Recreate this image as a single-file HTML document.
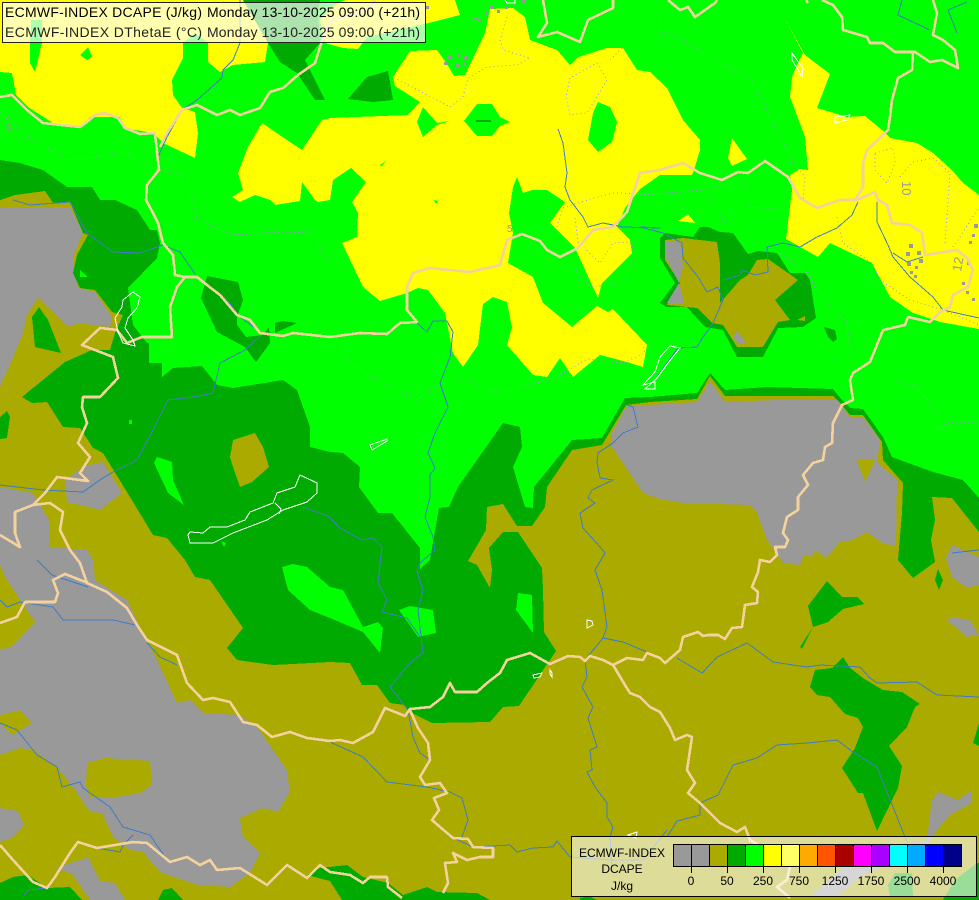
<!DOCTYPE html>
<html><head><meta charset="utf-8"><title>ECMWF-INDEX DCAPE</title>
<style>
html,body{margin:0;padding:0;background:#aa0;width:979px;height:900px;overflow:hidden}
svg{display:block}
text{font-family:"Liberation Sans",sans-serif;fill:#000}
.o{fill:#aaaa00}.g{fill:#999999}.d{fill:#00aa00}.l{fill:#00ff00}.y{fill:#ffff00}
.f polygon{shape-rendering:crispEdges}
.b polyline{fill:none;stroke:#f4d29e;stroke-width:2.6;stroke-linejoin:round;shape-rendering:crispEdges}
.r polyline{fill:none;stroke:#3f7cc4;stroke-width:1;shape-rendering:crispEdges}
.w polygon,.w polyline{fill:none;stroke:#fff;stroke-width:1;shape-rendering:crispEdges}
.c polyline{fill:none;stroke:#9c9cd0;stroke-width:1;stroke-dasharray:1 3;shape-rendering:crispEdges}
.s rect{fill:#999}
</style></head><body>
<svg width="979" height="900" viewBox="0 0 979 900" xmlns="http://www.w3.org/2000/svg">
<rect width="979" height="900" fill="#aaaa00"/>
<g class="f">
<!-- gray -->
<polygon class="g" points="0,208 70,207 83,233 73,257 78,288 95,292 112,317 110,327 78,323 68,327 58,317 38,298 27,315 23,333 15,353 0,387"/>
<polygon class="g" points="0,487 33,493 49,520 50,547 87,550 93,560 95,580 127,600 143,633 157,660 177,703 190,700 203,713 240,715 257,727 287,770 290,792 278,812 263,808 240,818 243,837 260,853 250,873 230,887 197,885 160,872 143,852 130,850 113,837 102,813 90,812 77,793 58,768 33,750 20,748 0,755 0,649 10,648 35,622 5,577 0,565"/>
<polygon class="g" points="65,480 83,467 103,462 122,493 100,510 67,502"/>
<polygon class="o" points="0,715 20,710 32,723 12,735 0,723"/>
<polygon class="o" points="87,763 105,758 150,761 152,785 140,793 110,798 90,797 86,785"/>
<polygon class="g" points="0,808 18,811 24,825 12,838 0,842"/>
<polygon class="g" points="55,868 88,857 100,881 115,883 125,900 90,900 72,874"/>
<polygon class="g" points="627,405 612,433 612,447 643,493 660,499 683,503 750,505 757,513 767,540 783,563 800,565 804,555 812,557 815,550 826,558 840,542 853,540 867,532 882,543 896,546 897,480 877,462 880,440 863,417 850,417 837,400 777,400 725,402 710,381 697,402 650,405"/>
<polygon class="o" points="857,460 875,460 865,482"/>
<polygon class="g" points="952,545 979,557 979,585 967,588 952,577 946,558"/>
<polygon class="g" points="947,620 952,617 970,620 979,635 967,637"/>
<polygon class="g" points="932,800 938,792 958,800 972,790 972,803 950,815 937,830 927,847 860,877 837,897 810,897 860,852 927,840"/>
<!-- dark green main -->
<polygon class="d" points="0,200 15,195 45,191 53,203 70,202 83,233 88,235 77,255 73,273 80,288 95,290 112,312 123,315 115,333 110,350 92,350 65,362 22,397 32,403 47,402 63,427 80,428 93,448 103,453 130,497 153,535 167,538 185,560 195,577 210,580 243,628 227,648 237,660 273,665 330,662 350,663 362,685 377,685 390,703 405,705 410,712 432,723 490,722 503,707 519,706 556,651 544,632 543,590 542,568 518,532 503,532 489,548 492,570 490,588 477,565 468,561 486,530 487,507 503,504 517,526 532,526 545,507 547,487 572,450 602,445 626,405 650,402 697,399 710,376 725,396 833,396 842,405 850,415 863,415 882,442 883,460 903,483 902,513 898,560 913,578 935,562 931,540 935,520 932,497 952,498 979,532 979,0 0,0"/>
<polygon class="o" points="233,440 255,433 263,447 269,467 252,482 240,487 233,467 230,457"/>
<!-- lime main -->
<polygon class="l" points="0,0 979,0 979,498 963,480 933,472 892,457 883,437 863,409 850,408 842,400 833,389 767,387 725,390 710,373 697,393 650,397 625,398 602,438 572,440 534,487 533,508 525,507 513,467 522,447 520,427 503,423 458,487 449,507 439,508 430,560 420,569 420,548 392,513 378,513 359,487 360,467 343,453 330,452 310,447 310,427 297,390 283,380 233,388 217,385 202,366 173,368 162,377 162,363 149,363 147,343 133,325 128,288 157,258 160,243 157,230 150,230 137,210 115,200 100,200 92,187 67,187 43,170 20,163 0,160"/>
<!-- lime holes in dark -->
<polygon class="l" points="157,457 172,462 173,480 184,505 168,493 154,463"/>
<polygon class="l" points="282,567 293,564 307,567 330,587 343,590 363,627 378,622 383,628 380,653 363,632 330,618 310,610 288,590"/>
<polygon class="l" points="399,610 410,606 433,610 436,633 418,637"/>
<polygon class="l" points="518,593 532,595 533,633 516,610"/>
<polygon class="l" points="80,270 88,277 80,277"/>
<polygon class="l" points="221,541 226,543 224,547"/>
<polygon class="l" points="129,420 132,420 132,424 129,424"/>
<!-- dark islands -->
<polygon class="d" points="207,276 217,278 238,282 243,300 237,317 237,325 246,337 263,335 269,327 270,343 256,362 245,347 217,332 201,298"/>
<polygon class="d" points="275,323 283,321 297,323 275,333"/>
<polygon class="d" points="39,307 48,320 61,353 35,347 32,317"/>
<polygon class="d" points="7,411 10,417 7,438 0,439 0,417"/>
<polygon class="d" points="145,343 149,343 149,363 146,363"/>
<polygon class="d" points="938,569 943,580 939,590 935,580"/>
<polygon class="d" points="827,581 842,597 857,597 864,604 843,609 828,622 813,627 802,649 800,647 813,627 808,606"/>
<polygon class="d" points="843,657 850,668 863,678 883,690 902,692 920,704 915,707 907,727 889,746 902,766 898,788 877,831 863,793 858,793 842,768 855,748 863,727 858,718 845,714 830,697 817,695 810,687 815,670 832,668"/>
<polygon class="d" points="979,723 973,743 979,746"/>
<polygon class="d" points="0,883 13,877 28,875 47,888 70,887 82,900 0,900"/>
<polygon class="d" points="158,900 163,890 172,888 183,900"/>
<polygon class="d" points="307,875 320,868 347,865 363,877 388,883 403,895 427,887 437,892 477,893 490,900 342,900 330,881"/>
<polygon class="d" points="580,898 588,896 597,900 580,900"/>
<polygon class="d" points="888,885 895,873 912,873 913,897 890,897"/>
<polygon class="d" points="943,900 955,880 977,863 979,863 979,900"/>
<!-- Kyiv-like island -->
<polygon class="d" points="700,227 708,227 720,232 733,233 748,254 758,251 777,253 790,273 805,273 810,280 816,318 803,327 778,328 763,357 737,357 723,330 705,327 687,307 667,307 660,303 675,283 660,258 660,238 665,233 693,237"/>
<polygon class="o" points="665,240 683,238 717,242 720,263 720,303 740,280 748,275 757,260 768,259 798,280 775,300 790,320 778,322 763,347 737,347 723,325 712,323 697,308 667,305 680,283 665,260"/>
<polygon class="o" points="797,320 805,316 805,321"/>
<polygon class="g" points="666,241 680,242 683,267 679,283 684,303 667,303 679,283 666,258"/>
<polygon class="g" points="737,331 746,343 737,343 733,337"/>
<polygon class="d" points="824,327 835,330 837,339 833,342 828,337"/>
<!-- yellow -->
<polygon class="y" points="0,0 243,0 268,43 265,62 233,65 220,72 208,62 208,43 195,33 183,43 183,58 172,80 173,95 182,108 195,112 198,133 195,158 163,143 153,133 123,128 120,117 90,117 87,120 80,128 53,123 28,107 16,95 12,73 0,72"/>
<polygon class="y" points="325,43 320,20 333,6 345,0 455,0 460,15 433,22 367,37 358,49 343,48"/>
<polygon class="y" points="393,77 410,51 437,50 447,64 454,76 465,75 485,33 490,9 513,8 525,17 530,40 557,50 570,65 578,57 607,48 623,48 637,70 650,72 667,88 683,120 700,140 700,150 694,170 692,175 660,175 640,189 625,208 617,227 630,240 632,253 602,283 598,298 575,248 550,223 565,202 547,190 532,190 523,193 517,177 513,187 509,213 513,233 508,263 533,277 543,303 572,327 597,306 608,312 613,309 647,345 643,367 627,362 600,355 573,377 560,358 547,377 533,375 507,345 512,327 507,302 493,297 483,304 478,345 463,367 453,353 445,313 428,290 418,288 407,293 380,301 363,287 342,243 357,237 358,213 352,202 366,182 351,168 333,180 330,200 318,202 315,200 302,182 300,201 275,205 270,200 255,195 240,202 232,197 243,190 238,173 248,147 262,123 287,140 302,150 322,120 330,118 408,115 420,102 395,86"/>
<polygon class="y" points="785,19 805,55 830,74 817,108 847,117 865,116 882,130 890,138 917,143 933,153 952,170 963,183 979,195 979,329 940,322 913,313 890,297 872,263 830,243 818,257 786,239 792,190 790,175 800,169 808,170 805,137 790,97 792,77 797,65 803,53"/>
<polygon class="y" points="732,138 747,159 732,166 728,158"/>
<polygon class="y" points="688,214 695,223 678,221"/>
<!-- lime holes in yellow -->
<polygon class="l" points="30,43 42,43 35,72 30,63"/>
<polygon class="l" points="30,43 42,43 42,20 31,20"/>
<polygon class="l" points="80,55 88,47 92,57 87,60"/>
<polygon class="l" points="423,107 437,123 450,121 437,125 423,137 417,122"/>
<polygon class="l" points="477,104 492,104 500,117 510,122 500,126 492,136 477,136 464,121"/>
<polygon class="l" points="598,102 610,107 617,122 612,142 598,152 588,140 593,113"/>
<polygon class="l" points="380,165 386,161 381,167"/>
<polygon class="l" points="434,200 438,201 436,204"/>
<!-- top darks -->
<polygon class="d" points="243,0 320,0 318,13 320,43 305,60 325,100 315,100 297,73 280,62 268,43"/>
<polygon class="d" points="388,71 393,100 373,102 348,99 367,77"/>
<polygon class="d" points="476,120 491,120 491,122 476,122"/>
</g>
<!-- contour dots -->
<g class="c">
<polyline points="507,17 500,40 503,50 530,58 517,65 487,67 468,78 463,97 450,107 393,77"/>
<polyline points="597,63 607,80 587,113 570,115 566,97 570,78 597,63"/>
<polyline points="875,153 893,148 895,163 887,183 875,170 875,153"/>
<polyline points="900,177 913,162 933,158 950,173 945,243"/>
<polyline points="0,113 33,140 67,160 127,153 157,170 187,177 193,200 197,220 233,235 283,232 313,233 328,263"/>
<polyline points="343,345 347,360 373,378 417,400 443,382 463,378 497,393 537,383 557,377 587,359 623,363 645,353 643,345"/>
<polyline points="575,218 578,242 600,263 613,243 630,242"/>
<polyline points="573,267 590,287 623,283 637,257 630,242"/>
<polyline points="557,227 563,208 597,197 613,193 660,194"/>
<polyline points="660,17 660,33 680,38 717,62 750,77 762,100 793,163 805,177 803,200"/>
<polyline points="640,195 703,190 743,180 750,207 790,210"/>
<polyline points="710,193 727,227"/>
<polyline points="743,243 767,245 805,270 817,290 847,323 850,350 830,360"/>
<polyline points="837,217 843,243 872,263 880,280 910,300 943,310 979,325"/>
<polyline points="953,247 960,237 979,207"/>
<polyline points="893,380 917,387 927,400 937,413 938,428 947,423 979,423"/>
<polyline points="610,60 622,48 640,48"/>
</g>
<g class="s">
<rect x="909" y="244" width="4" height="4"/><rect x="906" y="252" width="4" height="4"/><rect x="917" y="251" width="4" height="4"/><rect x="907" y="262" width="4" height="4"/><rect x="919" y="259" width="4" height="4"/><rect x="915" y="266" width="3" height="3"/><rect x="910" y="271" width="3" height="3"/><rect x="914" y="275" width="3" height="3"/><rect x="974" y="224" width="4" height="4"/><rect x="969" y="241" width="3" height="3"/><rect x="972" y="234" width="3" height="3"/><rect x="967" y="262" width="3" height="3"/><rect x="962" y="282" width="3" height="3"/><rect x="966" y="291" width="3" height="3"/><rect x="972" y="298" width="3" height="3"/>
<rect x="448" y="56" width="3" height="3"/><rect x="457" y="54" width="3" height="3"/><rect x="464" y="56" width="3" height="3"/><rect x="444" y="62" width="4" height="3"/><rect x="456" y="64" width="3" height="3"/><rect x="463" y="62" width="3" height="3"/><rect x="474" y="17" width="3" height="3"/><rect x="478" y="19" width="3" height="3"/><rect x="485" y="12" width="3" height="3"/><rect x="490" y="6" width="3" height="3"/><rect x="497" y="10" width="3" height="3"/><rect x="505" y="6" width="3" height="3"/><rect x="513" y="3" width="3" height="3"/><rect x="522" y="0" width="3" height="3"/><rect x="414" y="17" width="3" height="3"/><rect x="426" y="6" width="3" height="3"/>
</g>
<text x="0" y="0" font-size="13" transform="translate(902,181) rotate(90)" style="fill:#999">10</text>
<text x="0" y="0" font-size="13" transform="translate(961,272) rotate(-80)" style="fill:#999">12</text>
<text x="507" y="232" font-size="10" style="fill:#999">5</text>
<text x="6" y="131" font-size="10" style="fill:#999">6</text>
<!-- rivers -->
<g class="r">
<polyline points="240,0 240,43 233,60 223,70 222,78 197,100 182,110 167,137 158,157"/>
<polyline points="558,129 563,143 567,173 565,187 570,200 583,217 588,227 603,223 623,227 660,228 640,227 663,233 682,243 683,258 698,277 707,292 718,287 723,300 712,325 703,337 697,347 678,348 657,377"/>
<polyline points="723,280 740,275 742,270 755,275 768,272 767,247 783,243 800,247 817,237 837,228 852,215 858,202"/>
<polyline points="877,202 877,222 888,245 893,257 910,277 933,297 943,310 979,318"/>
<polyline points="893,253 907,262 923,257"/>
<polyline points="13,200 30,205 70,202 87,233 113,252 140,253 163,245 180,252 197,277 227,300 240,317 258,330 260,336 245,350 220,363 213,393 193,397 168,400 153,430 137,460 113,472 100,480 83,492 43,490 0,485"/>
<polyline points="400,322 417,323 427,332 433,321 447,321 453,332 450,357 440,383 448,407 435,433 428,453 435,468 430,475 430,497 425,517 433,537 435,550 420,563 417,572 423,590 418,610 423,653 410,663 390,687 408,710 413,737 420,753 430,760"/>
<polyline points="330,518 340,528 362,540 373,538 382,547 378,583 382,590 387,600 382,612 407,618 420,637"/>
<polyline points="303,507 330,517"/>
<polyline points="627,405 633,407 638,427 623,433 613,443 598,453 597,462 600,478 613,480 592,490 588,498 595,503 580,513 583,528 600,547 605,553 595,570 602,590 607,627 603,638 585,660 587,677 582,687 593,707 588,718 597,747 590,750 592,770 587,772 595,787 607,803 607,817 613,827 610,837 612,868"/>
<polyline points="603,638 623,642 647,652"/>
<polyline points="677,658 702,673 717,657 747,643 773,662 807,667 820,665 860,667 870,678 877,683 917,682 937,695 979,697"/>
<polyline points="667,837 677,821 700,815 700,803 718,795 733,765 757,758 777,745 807,743 837,740 853,752 877,767 893,807 905,837 915,860"/>
<polyline points="330,742 363,757 387,782 427,787 450,792 462,798 468,820 462,837"/>
<polyline points="447,835 473,847 510,845 517,852 533,848 553,847 557,841 570,857 610,860 643,860 667,830"/>
<polyline points="0,600 7,607 20,602 53,607 63,620 113,620 135,625"/>
<polyline points="37,560 52,575 88,587"/>
<polyline points="147,643 160,657 177,665"/>
<polyline points="0,723 17,730 37,755 57,767 62,787 80,782 83,788 110,807 123,827 150,835 165,857"/>
<polyline points="133,835 123,845 120,852 97,848"/>
<polyline points="23,897 28,890 47,888"/>
<polyline points="952,553 979,550"/>
<polyline points="902,0 898,15 930,30"/>
<polyline points="948,10 967,2"/>
<polyline points="948,10 957,33"/>
</g>
<!-- borders -->
<g class="b">
<polyline points="0,97 12,95 27,110 43,123 80,127 87,122 95,115 105,113 118,118 125,128 140,134 155,133 157,152 159,170 147,185 146,200 153,213 158,223 163,243 173,255 175,275 185,277 197,277 207,285 220,295 237,315 250,320 260,333 283,336 293,333 330,337 360,333 387,334 400,323 417,322 407,310 407,287 413,273 430,268 470,272 500,265 507,240 522,234 540,241 547,250 560,257 578,248 593,230 613,227 627,212 640,173 660,170 683,163 700,173 722,180 738,172 748,173 765,161 788,177 800,198 817,208 840,200 857,200 875,192 878,200 887,205 892,223 910,225 922,233 925,255 957,250 967,258 973,270 968,287 953,295 950,307 940,312 930,322 908,317 905,325 883,330 870,362 853,373 850,380 853,400 842,405 833,423 832,443 825,447 823,460 813,463 803,475 808,485 798,497 798,510 787,517 783,533 788,540 785,547 775,547 777,555 770,562 760,560 758,572 752,587 758,592 757,603 745,605 742,627 732,628 725,639 718,635 708,635 703,636 698,632 683,637 680,650 665,663 660,658 647,653 643,660 627,658 613,665 603,660 590,656 585,661 580,657 568,656 550,664 530,653 507,660 500,673 487,683 477,692 455,692 450,683 443,697 430,707 410,709 405,716 385,708 373,732 353,743 340,740 330,741 307,738 290,732 272,737 257,725 243,722 230,702 213,698 203,700 187,683 177,655 147,640 137,625 127,608 107,592 87,583 80,563 70,550 60,530 63,512 50,503 33,505 45,493 57,477 88,481 80,473 90,457 78,443 87,423 82,407 83,397 100,397 118,378 113,357 82,345 100,328 117,330 127,343 142,337 172,337 170,307 177,287 185,277"/>
<polyline points="33,505 15,512 15,533 20,547 0,535"/>
<polyline points="0,623 17,617 25,602 55,602 58,593 53,580 65,574 88,583"/>
<polyline points="0,845 13,860 33,882 47,888 55,877 70,853 78,842 97,848 133,842 147,843 170,862 187,857 200,865 210,860 217,870 240,868 267,885 287,865 307,878 320,865 330,872 350,875 363,883 370,877 387,877 388,887 402,898"/>
<polyline points="443,893 448,883 445,863 457,862 453,853 467,860 480,857 493,857 493,848 473,847 468,839 453,838 440,827 432,820 439,810 434,798 447,793 440,783 425,785 420,777 430,760 428,743 418,728 410,710"/>
<polyline points="613,665 625,685 630,693 640,697 650,707 660,712 670,728 675,740 687,735 692,737 687,770 695,783 688,793 700,803 720,823 737,832 745,827 750,840 770,852 790,867 787,880 777,887 790,898"/>
<polyline points="328,25 320,47 315,63 298,75 283,88 270,92 260,108 240,115 230,110 217,115 197,105 182,110 167,133 160,147"/>
<polyline points="328,25 333,20 367,10 375,0"/>
<polyline points="543,0 547,23 538,37 557,32 580,42 588,20 613,8 613,0"/>
<polyline points="668,0 680,10 688,7 695,17 715,3 717,0"/>
<polyline points="806,0 808,3"/>
<polyline points="822,0 833,5 842,17 843,30 867,37 870,43 883,43 895,52 915,52 930,62 942,60 958,68 955,50 943,40 933,35 937,13 933,0"/>
<polyline points="913,52 912,70 898,78 892,100 890,117 888,130 867,150 863,163 863,187 855,200"/>
</g>
<!-- lakes -->
<g class="w">
<polygon points="188,535 190,532 203,533 210,527 227,527 245,520 250,512 273,503 277,493 295,487 300,475 317,483 317,493 307,502 283,510 267,520 233,533 213,543 190,543"/>
<polyline points="275,503 281,509 279,514"/>
<polygon points="123,300 133,292 140,297 137,308 128,318 125,328 133,340 135,346 123,343 118,332 115,318 122,307"/>
<polygon points="370,445 387,439 387,441 372,450"/>
<polygon points="670,346 680,348 668,363 657,378 645,389 655,389 655,382 643,385 655,372 660,357"/>
<polygon points="792,53 797,60 803,68 802,77 797,68 792,60"/>
<polygon points="835,117 850,115 847,120 835,123"/>
<polygon points="587,620 592,621 593,625 587,628 587,624"/>
<polygon points="533,675 542,673 540,677 534,678"/>
<polygon points="550,670 552,673 552,677 550,674"/>
<polygon points="628,835 637,832 636,838"/>
<polyline points="505,0 507,3 515,3 515,0"/>
</g>
<!-- title box -->
<rect x="2.5" y="2.5" width="423" height="40" fill="#fff" fill-opacity=".68" stroke="#222" stroke-width="1" shape-rendering="crispEdges"/>
<text x="5" y="17" font-size="14" textLength="197" lengthAdjust="spacing">ECMWF-INDEX DCAPE (J/kg)</text>
<text x="207" y="17" font-size="14" textLength="213" lengthAdjust="spacing">Monday 13-10-2025 09:00 (+21h)</text>
<text x="5" y="37" font-size="14" textLength="197" lengthAdjust="spacing" style="fill:#222">ECMWF-INDEX DThetaE (°C)</text>
<text x="207" y="37" font-size="14" textLength="213" lengthAdjust="spacing" style="fill:#222">Monday 13-10-2025 09:00 (+21h)</text>
<!-- legend -->
<rect x="571.5" y="836.5" width="405" height="60" fill="#fff" fill-opacity=".6" stroke="#000" stroke-width="1" shape-rendering="crispEdges"/>
<g font-size="12" text-anchor="middle">
<text x="622" y="857" textLength="86" lengthAdjust="spacing">ECMWF-INDEX</text>
<text x="622" y="873">DCAPE</text>
<text x="622" y="890">J/kg</text>
</g>
<g stroke="#000" stroke-width="1" shape-rendering="crispEdges">
<rect x="673.5" y="844.5" width="18" height="22" fill="#999"/>
<rect x="691.5" y="844.5" width="18" height="22" fill="#999"/>
<rect x="709.5" y="844.5" width="18" height="22" fill="#aaaa00"/>
<rect x="727.5" y="844.5" width="18" height="22" fill="#00aa00"/>
<rect x="745.5" y="844.5" width="18" height="22" fill="#00ff00"/>
<rect x="763.5" y="844.5" width="18" height="22" fill="#ffff00"/>
<rect x="781.5" y="844.5" width="18" height="22" fill="#ffff66"/>
<rect x="799.5" y="844.5" width="18" height="22" fill="#ffaa00"/>
<rect x="817.5" y="844.5" width="18" height="22" fill="#ff5500"/>
<rect x="835.5" y="844.5" width="18" height="22" fill="#aa0000"/>
<rect x="853.5" y="844.5" width="18" height="22" fill="#ff00ff"/>
<rect x="871.5" y="844.5" width="18" height="22" fill="#aa00ff"/>
<rect x="889.5" y="844.5" width="18" height="22" fill="#00ffff"/>
<rect x="907.5" y="844.5" width="18" height="22" fill="#00aaff"/>
<rect x="925.5" y="844.5" width="18" height="22" fill="#0000ff"/>
<rect x="943.5" y="844.5" width="18" height="22" fill="#000088"/>
<path d="M691.5 867V873M727.5 867V873M763.5 867V873M799.5 867V873M835.5 867V873M871.5 867V873M907.5 867V873M943.5 867V873" fill="none"/>
</g>
<g font-size="12" text-anchor="middle">
<text x="691" y="885">0</text>
<text x="727" y="885">50</text>
<text x="763" y="885">250</text>
<text x="799" y="885">750</text>
<text x="835" y="885">1250</text>
<text x="871" y="885">1750</text>
<text x="907" y="885">2500</text>
<text x="943" y="885">4000</text>
</g>
</svg>
</body></html>
